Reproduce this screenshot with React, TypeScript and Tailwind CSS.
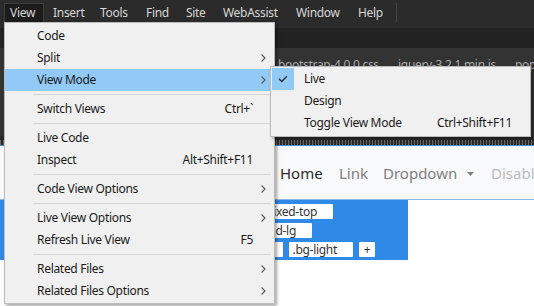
import React from "react";

const FONT = "font-['Noto_Sans','Liberation_Sans',sans-serif]";

function Arrow() {
  return (
    <svg width="5" height="8" viewBox="0 0 5 8" className="block">
      <polyline points="0.5,0.5 4,4 0.5,7.5" fill="none" stroke="#555" strokeWidth="1.1" />
    </svg>
  );
}

function Item({
  label,
  shortcut,
  arrow,
  active,
}: {
  label: string;
  shortcut?: string;
  arrow?: boolean;
  active?: boolean;
}) {
  return (
    <div className={`h-[22px] flex items-center ${active ? "bg-[#91c9f7]" : ""}`}>
      <span className="pl-[32px] flex-1 whitespace-nowrap">{label}</span>
      {shortcut && <span className="whitespace-nowrap">{shortcut}</span>}
      <span className="w-[18px] flex justify-center pl-[2px]">{arrow && <Arrow />}</span>
    </div>
  );
}

function Sep() {
  return (
    <div className="h-[7px] flex items-center">
      <div className="h-px bg-[#d5d5d5] ml-[28px] w-[239px]" />
    </div>
  );
}

function SubItem({ label, shortcut, checked }: { label: string; shortcut?: string; checked?: boolean }) {
  return (
    <div className="h-[22px] flex items-center">
      <div className={`w-[22px] h-[22px] flex items-center justify-center ${checked ? "bg-[#91c9f7]" : ""}`}>
        {checked && (
          <svg width="10" height="8" viewBox="0 0 10 8">
            <polyline points="1,3.8 3.8,6.5 8.8,1.2" fill="none" stroke="#2a2a2a" strokeWidth="1.3" />
          </svg>
        )}
      </div>
      <span className="pl-[10px] flex-1 whitespace-nowrap">{label}</span>
      {shortcut && <span className="whitespace-nowrap mr-[18px]">{shortcut}</span>}
    </div>
  );
}

function Tag({ children }: { children: React.ReactNode }) {
  return (
    <span className="bg-white h-[15px] pl-[4px] pr-[16px] shrink-0 flex items-center whitespace-nowrap rounded-[1px]">
      {children}
    </span>
  );
}

export default function App() {
  const menus = [
    { t: "Insert", w: "w-[47px]" },
    { t: "Tools", w: "w-[46px]" },
    { t: "Find", w: "w-[40px]" },
    { t: "Site", w: "w-[37px]" },
    { t: "WebAssist", w: "w-[73px]" },
    { t: "Window", w: "w-[62px]" },
    { t: "Help", w: "w-[44px]" },
  ];
  return (
    <div className={`relative w-[534px] h-[306px] overflow-hidden bg-white text-[12px] tracking-[-0.3px] ${FONT}`}>
      {/* menubar */}
      <div className="h-[28px] bg-[#2b2b2b] flex items-start pt-[3px] pl-[4px] text-[#d6d6d6]">
        <div className="w-[40px] h-[19px] shrink-0 bg-[#1c1c1c] border border-b-0 border-[#3d3d3d] pl-[5px] flex items-center mr-[3px]">
          View
        </div>
        {menus.map((m) => (
          <div key={m.t} className={`${m.w} shrink-0 h-[19px] pl-[6px] flex items-center`}>
            {m.t}
          </div>
        ))}
        <div className="w-px h-[19px] bg-[#444]" />
      </div>
      <div className="h-[20px] bg-[#222222]" />
      {/* tab row */}
      <div className="h-[88px] bg-[#333333] text-[#a9a9a9] pt-[8px] flex whitespace-nowrap">
        <span className="ml-[278px] w-[120px] shrink-0">bootstrap-4.0.0.css</span>
        <span className="w-[117px] shrink-0">jquery-3.2.1.min.js</span>
        <span className="shrink-0">popper.js</span>
      </div>
      {/* ruler */}
      <div className="h-[9px] bg-[#2a2a2a] flex flex-col justify-end">
        <div className="h-[5px] bg-[repeating-linear-gradient(90deg,#6a6a6a_0px,#6a6a6a_1px,#2a2a2a_1px,#2a2a2a_3px)]" />
      </div>
      <div className="h-px bg-[#3d8ed0]" />
      {/* navbar */}
      <div className="h-[54px] bg-[#f8f9fa] border-b border-[#8db8e0] flex items-center text-[15px] tracking-normal pt-[2px] whitespace-nowrap">
        <span className="ml-[280px] w-[59px] shrink-0 text-[#2a2a2a]">Home</span>
        <span className="w-[44px] shrink-0 text-[#808080]">Link</span>
        <span className="w-[108px] shrink-0 text-[#808080] flex items-center">
          Dropdown
          <svg width="7" height="4" viewBox="0 0 7 4" className="ml-[10px]">
            <polygon points="0,0 7,0 3.5,4" fill="#808080" />
          </svg>
        </span>
        <span className="shrink-0 text-[#bdbdbd]">Disabled</span>
      </div>
      {/* blue selection box */}
      <div className="w-[408px] h-[60px] bg-[#2e8ae6] pt-[4px] flex flex-col gap-[4px] text-[12px] text-[#333]">
        <div className="w-[333px] flex justify-end gap-[6px]">
          <Tag>nav</Tag>
          <Tag>.navbar</Tag>
          <Tag>.fixed-top</Tag>
        </div>
        <div className="w-[312px] flex justify-end">
          <Tag>.navbar-expand-lg</Tag>
        </div>
        <div className="w-[375px] flex justify-end gap-[6px]">
          <Tag>.navbar-light</Tag>
          <Tag>.bg-light</Tag>
          <span className="bg-white h-[15px] w-[16px] shrink-0 flex items-center justify-center rounded-[1px]">+</span>
        </div>
      </div>

      {/* main dropdown menu */}
      <div className="absolute left-[4px] top-[22px] w-[271px] bg-[#f0f0f0] border border-[#bcbcbc] pt-[2px] pb-px pr-[3px] text-[#1a1a1a] shadow-[2px_2px_3px_rgba(0,0,0,0.35)]">
        <Item label="Code" />
        <Item label="Split" arrow />
        <Item label="View Mode" arrow active />
        <Sep />
        <Item label="Switch Views" shortcut="Ctrl+`" />
        <Sep />
        <Item label="Live Code" />
        <Item label="Inspect" shortcut="Alt+Shift+F11" />
        <Sep />
        <Item label="Code View Options" arrow />
        <Sep />
        <Item label="Live View Options" arrow />
        <Item label="Refresh Live View" shortcut="F5" />
        <Sep />
        <Item label="Related Files" arrow />
        <Item label="Related Files Options" arrow />
      </div>

      {/* submenu */}
      <div className="absolute left-[270px] top-[66px] w-[261px] bg-[#f0f0f0] border border-[#bcbcbc] pt-px pb-[2px] pl-px text-[#1a1a1a] shadow-[2px_2px_3px_rgba(0,0,0,0.35)]">
        <SubItem label="Live" checked />
        <SubItem label="Design" />
        <SubItem label="Toggle View Mode" shortcut="Ctrl+Shift+F11" />
      </div>
    </div>
  );
}
